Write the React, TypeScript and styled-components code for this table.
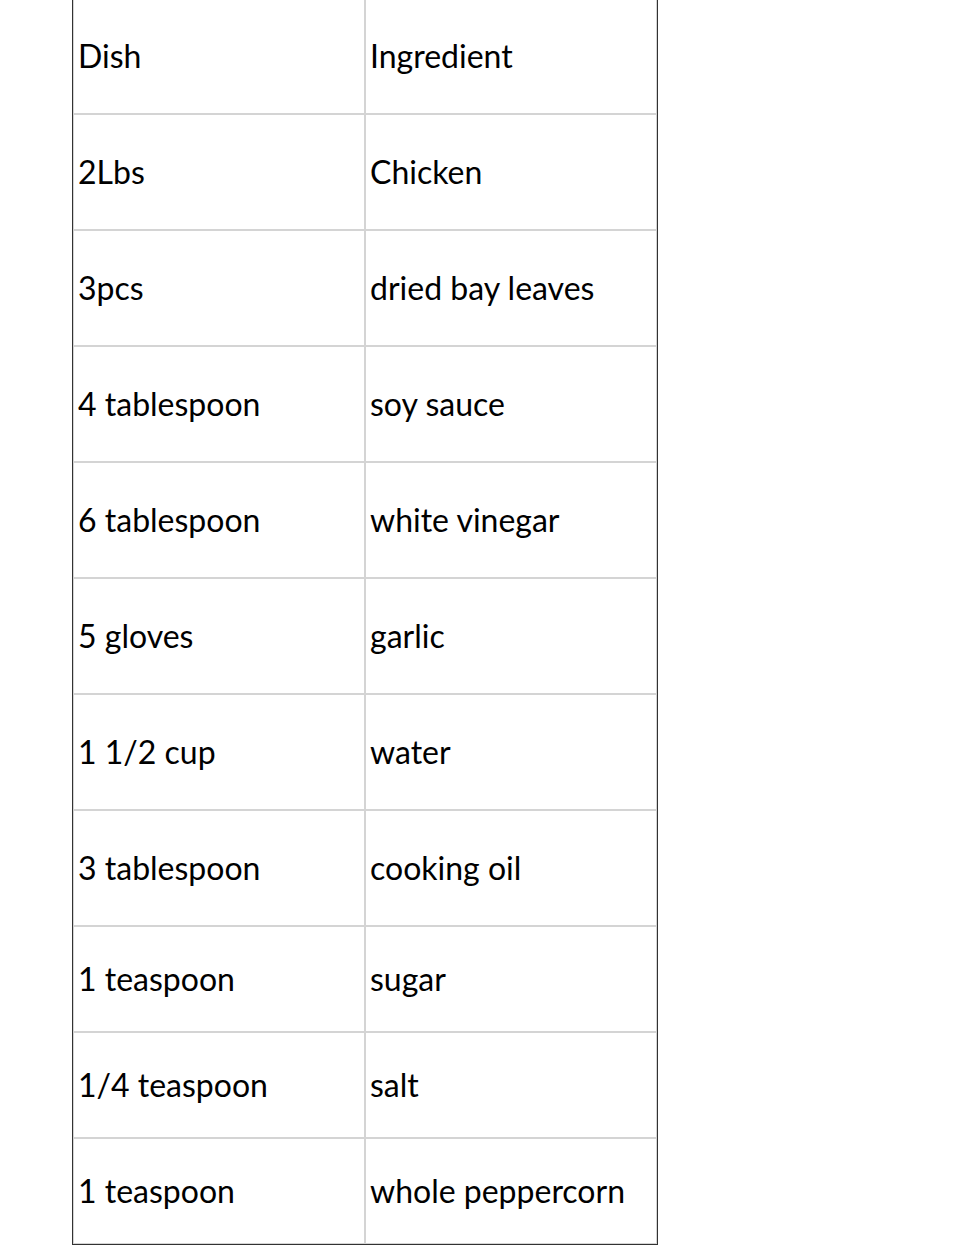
import styled, {createGlobalStyle} from "styled-components";

const GlobalStyle = createGlobalStyle`
    html, body {
        margin: 0;
        padding: 0;
        background: #ffffff;
    }
    body {
        font-family: Lato, "Open Sans", sans-serif;
        color: #000;
    }
`;

const Page = styled.div`
    padding-left: 72px;
    margin-top: -3px;
`;

const RecipeTable = styled.table`
    width: 586px;
    border: 1px solid #333;
    border-collapse: separate;
    border-spacing: 0;
    table-layout: fixed;
`;

const Row = styled.tr<{ $short?: boolean }>`
    height: ${(p) => (p.$short ? "106px" : "116px")};
`;

const Cell = styled.td`
    border: 1px solid #d4d4d4;
    padding: 0 5px 0 4px;
    vertical-align: middle;
    font-size: 32px;
    line-height: 1.2;
    white-space: nowrap;
`;

const rows: [string, string][] = [
    ["Dish", "Ingredient"],
    ["2Lbs", "Chicken"],
    ["3pcs", "dried bay leaves"],
    ["4 tablespoon", "soy sauce"],
    ["6 tablespoon", "white vinegar"],
    ["5 gloves", "garlic"],
    ["1 1/2 cup", "water"],
    ["3 tablespoon", "cooking oil"],
    ["1 teaspoon", "sugar"],
    ["1/4 teaspoon", "salt"],
    ["1 teaspoon", "whole peppercorn"],
];

export default function App() {
    return (
        <>
            <GlobalStyle/>
            <Page>
                <RecipeTable>
                    <tbody>
                        {rows.map(([amount, ingredient], i) => (
                            <Row key={i} $short={i >= 8}>
                                <Cell>{amount}</Cell>
                                <Cell>{ingredient}</Cell>
                            </Row>
                        ))}
                    </tbody>
                </RecipeTable>
            </Page>
        </>
    );
}
